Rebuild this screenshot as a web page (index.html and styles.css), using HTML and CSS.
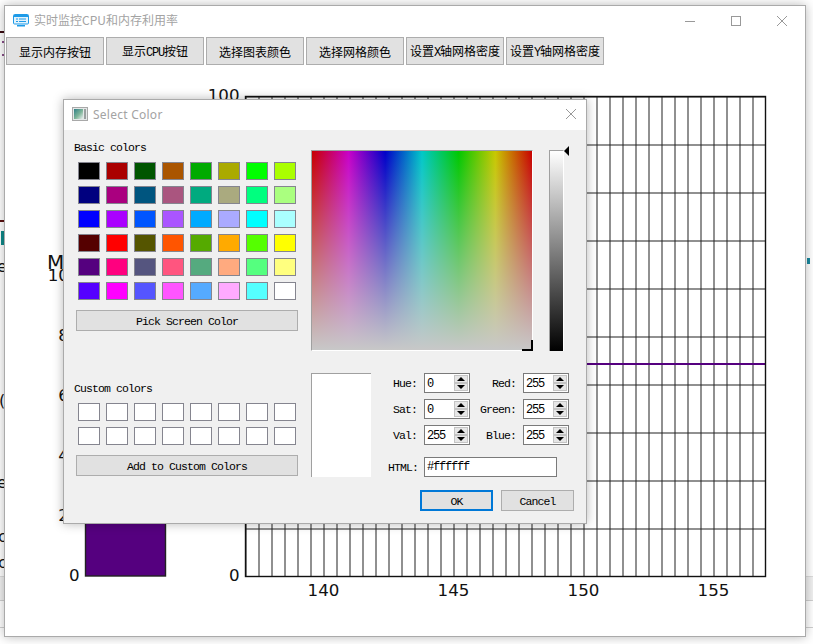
FILE: index.html
```html
<!DOCTYPE html>
<html>
<head>
    <meta charset="utf-8">
    <title>实时监控CPU和内存利用率</title>
    <link rel="stylesheet" href="styles.css">
</head>
<body>
    <!-- whatever sits behind the app window, only slivers of it show -->
    <svg class="backdrop" width="813" height="644" viewBox="0 0 813 644">
        <rect x="0" y="576" width="813" height="24" fill="#f0f0f0"/>
        <line x1="0" y1="576.5" x2="813" y2="576.5" stroke="#dcdcdc"/>
        <line x1="0" y1="600.5" x2="813" y2="600.5" stroke="#cfcfcf"/>
        <line x1="0" y1="627.5" x2="813" y2="627.5" stroke="#cfcfcf"/>
        <rect x="0" y="31" width="5" height="2" fill="#3a0a10"/>
        <rect x="2" y="41" width="3" height="2" fill="#8a4f8a"/>
        <rect x="2" y="54" width="3" height="2" fill="#8a4f8a"/>
        <rect x="0" y="220" width="5" height="2" fill="#5a1010"/>
        <rect x="1" y="231" width="3" height="14" fill="#0f8a8a"/>
        <rect x="807" y="258" width="3" height="6" fill="#1a8aa0"/>
        <text x="-3" y="272" class="sliver">e</text>
        <text x="-1" y="406" class="sliver">(</text>
        <text x="-3" y="488" class="sliver">e</text>
        <text x="-2" y="542" class="sliver">c</text>
        <text x="-2" y="568" class="sliver">c</text>
    </svg>

    <div class="window main-window">
        <div class="titlebar">
            <svg class="app-icon" width="16" height="13" viewBox="0 0 16 13">
                <rect x="0.5" y="0.5" width="15" height="9.5" rx="1" fill="#e4f3fc" stroke="#1e9be8"/>
                <rect x="1" y="1" width="14" height="2" fill="#1e9be8"/>
                <rect x="3" y="4.5" width="2" height="1" fill="#1e9be8"/>
                <rect x="6" y="4.5" width="7" height="1" fill="#1e9be8"/>
                <rect x="3" y="7" width="2" height="1" fill="#1e9be8"/>
                <rect x="6" y="7" width="7" height="1" fill="#1e9be8"/>
                <rect x="4" y="11" width="8" height="1.5" fill="#1e9be8"/>
            </svg>
            <span class="title-text">实时监控CPU和内存利用率</span>
            <div class="win-controls">
                <div class="win-btn">
                    <svg width="10" height="10" viewBox="0 0 10 10"><line x1="0" y1="5.5" x2="10" y2="5.5" stroke="#999"/></svg>
                </div>
                <div class="win-btn">
                    <svg width="10" height="10" viewBox="0 0 10 10"><rect x="0.5" y="0.5" width="9" height="9" fill="none" stroke="#999"/></svg>
                </div>
                <div class="win-btn">
                    <svg width="10" height="10" viewBox="0 0 10 10"><path d="M0 0L10 10M10 0L0 10" stroke="#999" fill="none"/></svg>
                </div>
            </div>
        </div>

        <div class="toolbar">
            <button class="tool-btn">显示内存按钮</button>
            <button class="tool-btn">显示<span class="latin">CPU</span>按钮</button>
            <button class="tool-btn">选择图表颜色</button>
            <button class="tool-btn">选择网格颜色</button>
            <button class="tool-btn">设置<span class="latin">X</span>轴网格密度</button>
            <button class="tool-btn">设置<span class="latin">Y</span>轴网格密度</button>
        </div>

        <svg class="plot" width="800" height="571" viewBox="5 65 800 571">
            <defs>
                <pattern id="grid" x="245.5" y="96.5" width="13" height="48" patternUnits="userSpaceOnUse">
                    <path d="M0.5 0V48M0 0.5H13" stroke="#222" fill="none" stroke-width="1"/>
                </pattern>
            </defs>

            <!-- memory bar -->
            <rect x="85.5" y="276" width="80" height="300" fill="#55007f" stroke="#222" stroke-width="1.4"/>
            <text x="47" y="269" class="plot-title">M</text>
            <text x="79.5" y="281" class="tick-y">100</text>
            <text x="79.5" y="341" class="tick-y">80</text>
            <text x="79.5" y="401" class="tick-y">60</text>
            <text x="79.5" y="461" class="tick-y">40</text>
            <text x="79.5" y="521" class="tick-y">20</text>
            <text x="79.5" y="581" class="tick-y">0</text>

            <!-- history line -->
            <rect x="245.5" y="96.5" width="520" height="480" fill="url(#grid)"/>
            <line x1="245" y1="364" x2="766" y2="364" stroke="#55007f" stroke-width="2"/>
            <rect x="245.5" y="96.5" width="520" height="480" fill="none" stroke="#111" stroke-width="1.4"/>
            <text x="239.5" y="101" class="tick-y">100</text>
            <text x="239.5" y="581" class="tick-y">0</text>
            <text x="323.5" y="596" class="tick-x">140</text>
            <text x="453.5" y="596" class="tick-x">145</text>
            <text x="583.5" y="596" class="tick-x">150</text>
            <text x="713.5" y="596" class="tick-x">155</text>
        </svg>
    </div>

    <div class="window dialog">
        <div class="dialog-bar">
            <svg class="dialog-icon" width="16" height="14" viewBox="0 0 16 14">
                <defs>
                    <linearGradient id="icon-fill" x1="0" y1="0" x2="1" y2="1">
                        <stop offset="0" stop-color="#2f7f86"/>
                        <stop offset="0.55" stop-color="#7fb59a"/>
                        <stop offset="1" stop-color="#eef2f2"/>
                    </linearGradient>
                </defs>
                <rect x="0.5" y="0.5" width="15" height="13" fill="#e4e8e8" stroke="#a8a8a8"/>
                <rect x="2" y="2" width="9" height="10" fill="url(#icon-fill)"/>
                <rect x="12" y="2" width="2" height="10" fill="#9aa0a0"/>
            </svg>
            <span class="dialog-title">Select Color</span>
            <svg class="dialog-close" width="10" height="10" viewBox="0 0 10 10"><path d="M0 0L10 10M10 0L0 10" stroke="#999" fill="none"/></svg>
        </div>

        <div class="dialog-body">
            <div class="col-left">
                <div class="group-label">Basic colors</div>
                <div class="swatches">
                    <div class="swatch" style="background:#000000"></div>
                    <div class="swatch" style="background:#aa0000"></div>
                    <div class="swatch" style="background:#005500"></div>
                    <div class="swatch" style="background:#aa5500"></div>
                    <div class="swatch" style="background:#00aa00"></div>
                    <div class="swatch" style="background:#aaaa00"></div>
                    <div class="swatch" style="background:#00ff00"></div>
                    <div class="swatch" style="background:#aaff00"></div>
                    <div class="swatch" style="background:#00007f"></div>
                    <div class="swatch" style="background:#aa007f"></div>
                    <div class="swatch" style="background:#00557f"></div>
                    <div class="swatch" style="background:#aa557f"></div>
                    <div class="swatch" style="background:#00aa7f"></div>
                    <div class="swatch" style="background:#aaaa7f"></div>
                    <div class="swatch" style="background:#00ff7f"></div>
                    <div class="swatch" style="background:#aaff7f"></div>
                    <div class="swatch" style="background:#0000ff"></div>
                    <div class="swatch" style="background:#aa00ff"></div>
                    <div class="swatch" style="background:#0055ff"></div>
                    <div class="swatch" style="background:#aa55ff"></div>
                    <div class="swatch" style="background:#00aaff"></div>
                    <div class="swatch" style="background:#aaaaff"></div>
                    <div class="swatch" style="background:#00ffff"></div>
                    <div class="swatch" style="background:#aaffff"></div>
                    <div class="swatch" style="background:#550000"></div>
                    <div class="swatch" style="background:#ff0000"></div>
                    <div class="swatch" style="background:#555500"></div>
                    <div class="swatch" style="background:#ff5500"></div>
                    <div class="swatch" style="background:#55aa00"></div>
                    <div class="swatch" style="background:#ffaa00"></div>
                    <div class="swatch" style="background:#55ff00"></div>
                    <div class="swatch" style="background:#ffff00"></div>
                    <div class="swatch" style="background:#55007f"></div>
                    <div class="swatch" style="background:#ff007f"></div>
                    <div class="swatch" style="background:#55557f"></div>
                    <div class="swatch" style="background:#ff557f"></div>
                    <div class="swatch" style="background:#55aa7f"></div>
                    <div class="swatch" style="background:#ffaa7f"></div>
                    <div class="swatch" style="background:#55ff7f"></div>
                    <div class="swatch" style="background:#ffff7f"></div>
                    <div class="swatch" style="background:#5500ff"></div>
                    <div class="swatch" style="background:#ff00ff"></div>
                    <div class="swatch" style="background:#5555ff"></div>
                    <div class="swatch" style="background:#ff55ff"></div>
                    <div class="swatch" style="background:#55aaff"></div>
                    <div class="swatch" style="background:#ffaaff"></div>
                    <div class="swatch" style="background:#55ffff"></div>
                    <div class="swatch" style="background:#ffffff"></div>
                </div>
                <button class="wide-btn">Pick Screen Color</button>

                <div class="group-label custom-label">Custom colors</div>
                <div class="swatches">
                    <div class="swatch"></div><div class="swatch"></div><div class="swatch"></div><div class="swatch"></div>
                    <div class="swatch"></div><div class="swatch"></div><div class="swatch"></div><div class="swatch"></div>
                    <div class="swatch"></div><div class="swatch"></div><div class="swatch"></div><div class="swatch"></div>
                    <div class="swatch"></div><div class="swatch"></div><div class="swatch"></div><div class="swatch"></div>
                </div>
                <button class="wide-btn">Add to Custom Colors</button>
            </div>

            <div class="col-right">
                <div class="picker-row">
                    <div class="spectrum">
                        <div class="crosshair"></div>
                    </div>
                    <div class="value-bar">
                        <div class="value-arrow"></div>
                    </div>
                </div>

                <div class="values-row">
                    <div class="preview"></div>
                    <div class="fields">
                        <div class="field"><label>Hue:</label><div class="spin"><span class="spin-val">0</span><div class="spin-btns"><div class="spin-up"></div><div class="spin-down"></div></div></div></div>
                        <div class="field"><label>Red:</label><div class="spin"><span class="spin-val">255</span><div class="spin-btns"><div class="spin-up"></div><div class="spin-down"></div></div></div></div>
                        <div class="field"><label>Sat:</label><div class="spin"><span class="spin-val">0</span><div class="spin-btns"><div class="spin-up"></div><div class="spin-down"></div></div></div></div>
                        <div class="field"><label>Green:</label><div class="spin"><span class="spin-val">255</span><div class="spin-btns"><div class="spin-up"></div><div class="spin-down"></div></div></div></div>
                        <div class="field"><label>Val:</label><div class="spin"><span class="spin-val">255</span><div class="spin-btns"><div class="spin-up"></div><div class="spin-down"></div></div></div></div>
                        <div class="field"><label>Blue:</label><div class="spin"><span class="spin-val">255</span><div class="spin-btns"><div class="spin-up"></div><div class="spin-down"></div></div></div></div>
                        <div class="field field-html"><label>HTML:</label><div class="html-input">#ffffff</div></div>
                    </div>
                </div>

                <div class="dialog-actions">
                    <button class="action-btn action-default">OK</button>
                    <button class="action-btn">Cancel</button>
                </div>
            </div>
        </div>
    </div>
</body>
</html>
```

FILE: styles.css
```css
* {
    box-sizing: border-box;
}

body {
    margin: 0;
    width: 813px;
    height: 644px;
    position: relative;
    overflow: hidden;
    background-color: #fff;
    font-family: "Noto Sans CJK SC", sans-serif;
}

button {
    font-family: inherit;
    color: #000;
    padding: 0;
    margin: 0;
}

.backdrop {
    position: absolute;
    left: 0;
    top: 0;
}

.sliver {
    font-family: "DejaVu Sans", sans-serif;
    font-size: 16px;
    fill: #111;
}

.window {
    position: absolute;
    background-color: #fff;
    border: 1px solid #aaa;
    box-shadow: 0 0 10px rgba(0, 0, 0, 0.28);
}

/* main window */

.main-window {
    left: 4px;
    top: 5px;
    width: 802px;
    height: 632px;
    display: flex;
    flex-direction: column;
}

.titlebar {
    height: 31px;
    display: flex;
    align-items: flex-start;
    padding-left: 8px;
}

.app-icon {
    margin-top: 8px;
}

.title-text {
    margin-left: 5px;
    margin-top: 5px;
    font-size: 12px;
    line-height: 18px;
    color: #a3a3a3;
}

.win-controls {
    margin-left: auto;
    display: flex;
}

.win-btn {
    width: 46px;
    height: 29px;
    display: flex;
    align-items: center;
    justify-content: center;
}

.toolbar {
    display: flex;
    gap: 2px;
    padding-left: 1px;
}

.tool-btn {
    width: 98px;
    height: 28px;
    border: 1px solid #adadad;
    background-color: #e1e1e1;
    font-size: 12px;
    white-space: nowrap;
}

.latin {
    font-family: "Liberation Mono", monospace;
    font-size: 12px;
    letter-spacing: -1.2px;
}

.plot {
    display: block;
}

.plot-title {
    font-family: "DejaVu Sans", sans-serif;
    font-size: 20px;
    fill: #111;
}

.tick-y,
.tick-x {
    font-family: "DejaVu Sans", sans-serif;
    font-size: 16.67px;
    fill: #111;
}

.tick-y {
    text-anchor: end;
}

.tick-x {
    text-anchor: middle;
}

/* color dialog */

.dialog {
    left: 63px;
    top: 99px;
    width: 524px;
    height: 425px;
    display: flex;
    flex-direction: column;
    font-family: "Liberation Mono", "Noto Sans CJK SC", monospace;
    font-size: 11.5px;
    letter-spacing: -0.9px;
}

.dialog-bar {
    height: 30px;
    flex: none;
    display: flex;
    align-items: center;
    padding: 0 10px 2px 8px;
}

.dialog-title {
    margin-left: 5px;
    font-family: "Noto Sans", sans-serif;
    font-size: 12px;
    letter-spacing: 0.25px;
    color: #a3a3a3;
}

.dialog-close {
    margin-left: auto;
}

.dialog-body {
    flex: 1;
    display: flex;
    background-color: #f0f0f0;
    padding-left: 11px;
}

.col-left {
    width: 236px;
    padding-top: 10px;
}

.group-label {
    height: 14px;
    line-height: 16px;
    margin: 0 0 8px -1px;
}

.custom-label {
    margin-top: 50px;
}

.swatches {
    margin-left: 3px;
    display: grid;
    grid-template-columns: repeat(8, 22px);
    grid-auto-rows: 18px;
    gap: 6px;
}

.swatch {
    border: 1px solid #85858f;
    background-color: #fff;
}

.wide-btn {
    display: block;
    width: 222px;
    height: 21px;
    margin: 10px 0 0 1px;
    padding-top: 1px;
    border: 1px solid #adadad;
    background-color: #e1e1e1;
    font-size: 11.5px;
    letter-spacing: -0.9px;
}

.col-right {
    width: 263px;
    padding-top: 20px;
}

.picker-row {
    display: flex;
    gap: 16px;
}

.spectrum {
    position: relative;
    width: 222px;
    height: 201px;
    border-top: 1px solid #a0a0a0;
    border-left: 1px solid #a0a0a0;
    border-right: 1px solid #fff;
    border-bottom: 1px solid #fff;
    background:
        linear-gradient(to bottom, rgba(200, 200, 200, 0), #c8c8c8),
        linear-gradient(to right, #c80000, #c800c8, #0000c8, #00c8c8, #00c800, #c8c800, #c80000);
}

.crosshair {
    position: absolute;
    right: -1px;
    bottom: -1px;
    width: 11px;
    height: 11px;
    border-right: 2px solid #000;
    border-bottom: 2px solid #000;
}

.value-bar {
    position: relative;
    width: 15px;
    height: 201px;
    border-top: 1px solid #a0a0a0;
    border-left: 1px solid #a0a0a0;
    border-right: 1px solid #fff;
    background: linear-gradient(to bottom, #fff, #000);
}

.value-arrow {
    position: absolute;
    left: 14px;
    top: -5px;
    width: 0;
    height: 0;
    border-top: 5px solid transparent;
    border-bottom: 5px solid transparent;
    border-right: 5px solid #000;
}

.values-row {
    display: flex;
    margin-top: 22px;
}

.preview {
    width: 60px;
    height: 104px;
    background-color: #fff;
    border-top: 1px solid #a0a0a0;
    border-left: 1px solid #a0a0a0;
}

.fields {
    display: grid;
    grid-template-columns: 99px 99px;
    grid-auto-rows: 20px;
    row-gap: 6px;
}

.field {
    display: flex;
    align-items: center;
    justify-content: flex-end;
    gap: 7px;
}

.field label {
    padding-top: 1px;
}

.field-html {
    grid-column: 1 / 3;
    height: 20px;
    align-self: start;
    margin-top: 6px;
    justify-content: flex-start;
    padding-left: 17px;
}

.field-html label {
    margin-right: -1px;
}

.spin {
    width: 46px;
    height: 20px;
    flex: none;
    display: flex;
    align-items: center;
    justify-content: space-between;
    border: 1px solid #7a7a7a;
    background-color: #fff;
    padding: 0 1px 0 2px;
    font-size: 12px;
    letter-spacing: -1.2px;
}

.spin-val {
    padding-top: 1px;
}

.spin-btns {
    width: 14px;
    height: 16px;
    display: flex;
    flex-direction: column;
}

.spin-up,
.spin-down {
    flex: 1;
    position: relative;
    background-color: #e6e6e6;
    border: 1px solid #c4c4c4;
}

.spin-up::after,
.spin-down::after {
    content: "";
    position: absolute;
    left: 2px;
    top: 1px;
    border-left: 4px solid transparent;
    border-right: 4px solid transparent;
}

.spin-up::after {
    border-bottom: 4px solid #000;
}

.spin-down::after {
    border-top: 4px solid #000;
}

.html-input {
    width: 133px;
    height: 20px;
    line-height: 19px;
    flex: none;
    padding-left: 2px;
    border: 1px solid #7a7a7a;
    background-color: #fff;
    font-size: 12px;
    letter-spacing: -1.2px;
}

.dialog-actions {
    display: flex;
    gap: 8px;
    justify-content: flex-end;
    margin-top: 13px;
}

.action-btn {
    width: 73px;
    height: 21px;
    padding-top: 1px;
    border: 1px solid #adadad;
    background-color: #e1e1e1;
    font-size: 11.5px;
    letter-spacing: -0.9px;
}

.action-default {
    border: 2px solid #0078d7;
}
```
